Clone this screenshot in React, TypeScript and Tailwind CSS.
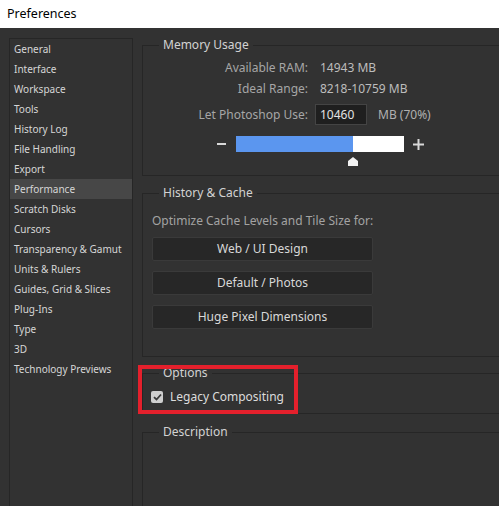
import React from 'react';

const sections = [
  'General',
  'Interface',
  'Workspace',
  'Tools',
  'History Log',
  'File Handling',
  'Export',
  'Performance',
  'Scratch Disks',
  'Cursors',
  'Transparency & Gamut',
  'Units & Rulers',
  'Guides, Grid & Slices',
  'Plug-Ins',
  'Type',
  '3D',
  'Technology Previews',
];

const font = { fontFamily: '"Noto Sans", "Open Sans", sans-serif' };

const Group: React.FC<{ title: string; className?: string; children?: React.ReactNode }> = ({ title, className, children }) => (
  <fieldset className={`relative shrink-0 border border-[#262626] w-[420px] min-w-0 ${className ?? ''}`}>
    <legend className="ml-[16px] px-[4px] h-[16px] leading-[16px] text-[12px] text-[#d2d2d2]">{title}</legend>
    {children}
  </fieldset>
);

const CacheButton: React.FC<{ label: string }> = ({ label }) => (
  <button className="w-[221px] h-[24px] rounded-[2px] bg-[#272727] border border-[#3a3a3a] text-[12px] text-[#d8d8d8]">
    {label}
  </button>
);

const App: React.FC = () => {
  return (
    <div className="w-[499px] h-[506px] overflow-hidden flex flex-col bg-[#323232]" style={font}>
      {/* Window title */}
      <div className="h-[28px] shrink-0 bg-white flex items-center pl-[7px] text-[12.5px] text-black">
        Preferences
      </div>

      <div className="flex-1 flex min-h-0">
        {/* Section list */}
        <div className="pl-[9px] pt-[10px] shrink-0">
          <div className="w-[124px] h-[480px] border border-[#262626] bg-[#323232]">
            {sections.map(s => (
              <div
                key={s}
                className={`h-[20px] flex items-center pl-[4px] text-[10px] text-[#d6d6d6] ${s === 'Performance' ? 'bg-[#474747]' : ''}`}
              >
                {s}
              </div>
            ))}
          </div>
        </div>

        {/* Settings */}
        <div className="flex-1 pl-[9px] pt-[9px] flex flex-col min-h-0">
          <Group title="Memory Usage" className="h-[139px]">
            <div className="mt-[5px] flex flex-col text-[12px]">
              <div className="h-[20px] flex items-center">
                <span className="w-[165px] text-right text-[#a6a6a6]">Available RAM:</span>
                <span className="ml-[12px] text-[#bdbdbd]">14943 MB</span>
              </div>
              <div className="h-[21px] flex items-center">
                <span className="w-[165px] text-right text-[#a6a6a6]">Ideal Range:</span>
                <span className="ml-[12px] text-[#bdbdbd]">8218-10759 MB</span>
              </div>
              <div className="mt-[5px] h-[21px] flex items-center">
                <span className="w-[165px] text-right text-[#a6a6a6]">Let Photoshop Use:</span>
                <div className="ml-[7px] w-[52px] h-[21px] bg-[#1f1f1f] border border-[#444] flex items-center pl-[4px] text-[#e2e2e2]">
                  10460
                </div>
                <span className="ml-[11px] text-[#b0b0b0]">MB (70%)</span>
              </div>
              <div className="mt-[11px] flex items-center h-[16px]">
                <div className="ml-[74px] w-[9px] h-[2px] bg-[#d8d8d8]" />
                <div className="ml-[10px] relative w-[168px] h-[16px] bg-white flex">
                  <div className="w-[117px] h-full bg-[#5b96ef]" />
                  <svg className="absolute left-[111px] top-[21px]" width="12" height="9" viewBox="0 0 12 9">
                    <path d="M6 0 L11 4 L11 9 L1 9 L1 4 Z" fill="#f2f2f2" />
                  </svg>
                </div>
                <svg className="ml-[9px]" width="11" height="11" viewBox="0 0 11 11">
                  <rect x="0" y="4.5" width="11" height="2" fill="#d8d8d8" />
                  <rect x="4.5" y="0" width="2" height="11" fill="#d8d8d8" />
                </svg>
              </div>
            </div>
          </Group>

          <Group title="History & Cache" className="mt-[9px] h-[172px]">
            <div className="pl-[9px] pt-[11px] text-[12px] text-[#a3a3a3]">Optimize Cache Levels and Tile Size for:</div>
            <div className="pl-[9px] mt-[7px] flex flex-col gap-[10px]">
              <CacheButton label="Web / UI Design" />
              <CacheButton label="Default / Photos" />
              <CacheButton label="Huge Pixel Dimensions" />
            </div>
          </Group>

          <Group title="Options" className="mt-[8px] h-[49px]">
            <div className="pl-[8px] mt-[7px] flex items-center gap-[7px]">
              <div className="w-[12px] h-[12px] rounded-[2px] bg-[#cfcfcf] flex items-center justify-center">
                <svg width="9" height="8" viewBox="0 0 9 8">
                  <path d="M1 4.2 L3.5 6.5 L8 1.5" stroke="#3a3a3a" strokeWidth="1.8" fill="none" />
                </svg>
              </div>
              <span className="text-[12px] text-[#dcdcdc]">Legacy Compositing</span>
            </div>
            {/* annotation frame */}
            <div className="absolute left-[-5px] top-[-16px] w-[160px] h-[49px] border-[4px] border-[#e4202c]" />
          </Group>

          <Group title="Description" className="mt-[10px] h-[120px]" />
        </div>
      </div>
    </div>
  );
};

export default App;
